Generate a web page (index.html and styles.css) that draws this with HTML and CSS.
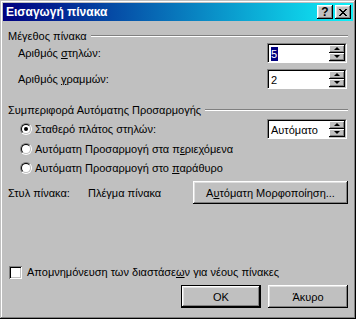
FILE: index.html
```html
<!DOCTYPE html>
<html lang="el">
<head>
<meta charset="utf-8">
<title>Εισαγωγή πίνακα</title>
<link rel="stylesheet" href="styles.css">
</head>
<body>
<div class="window">
  <div class="titlebar">
    <span class="title">Εισαγωγή πίνακα</span>
    <div class="tbtns">
      <span class="tbtn help">?</span>
      <span class="tbtn close"><svg width="8" height="7" viewBox="0 0 8 7"><path d="M0 0h2v1h1v1h2v-1h1v-1h2v1h-1v1h-1v1h-1v1h1v1h1v1h1v1h-2v-1h-1v-1h-2v1h-1v1h-2v-1h1v-1h1v-1h1v-1h-1v-1h-1v-1h-1z" fill="#000"/></svg></span>
    </div>
  </div>
  <div class="content">
    <div class="group-head g1"><span>Μέγεθος πίνακα</span><i class="rule"></i></div>
    <div class="row r-cols">
      <span class="lbl indent">Αριθμός <u>σ</u>τηλών:</span>
      <div class="spin"><div class="field"><span class="sel">5</span></div><div class="arrows"><span class="sbtn"><i class="up"></i></span><span class="sbtn"><i class="down"></i></span></div></div>
    </div>
    <div class="row r-rows">
      <span class="lbl indent">Αριθμός <u>γ</u>ραμμών:</span>
      <div class="spin"><div class="field">2</div><div class="arrows"><span class="sbtn"><i class="up"></i></span><span class="sbtn"><i class="down"></i></span></div></div>
    </div>
    <div class="group-head g2"><span>Συμπεριφορά Αυτόματης Προσαρμογής</span><i class="rule"></i></div>
    <div class="row r-fixed">
      <span class="radio checked"><i></i></span>
      <span class="lbl">Σταθερό πλάτος στηλών:</span>
      <div class="spin"><div class="field">Αυτόματο</div><div class="arrows"><span class="sbtn"><i class="up"></i></span><span class="sbtn"><i class="down"></i></span></div></div>
    </div>
    <div class="row r-radio">
      <span class="radio"><i></i></span>
      <span class="lbl">Αυτόματη Προσαρμογή στα π<u>ε</u>ριεχόμενα</span>
    </div>
    <div class="row r-radio">
      <span class="radio"><i></i></span>
      <span class="lbl">Αυτόματη Προσαρμογή στο <u>π</u>αράθυρο</span>
    </div>
    <div class="row r-style">
      <span class="lbl style-key">Στυλ πίνακα:</span>
      <span class="lbl">Πλέγμα πίνακα</span>
      <span class="btn autofmt">Α<u>υ</u>τόματη Μορφοποίηση...</span>
    </div>
    <div class="row r-check">
      <span class="check"></span>
      <span class="lbl">Απομνημόνευση των διαστάσε<u>ω</u>ν για νέους πίνακες</span>
    </div>
    <div class="row r-btns">
      <span class="btn default">OK</span>
      <span class="btn cancel">Άκυρο</span>
    </div>
  </div>
</div>
</body>
</html>
```
FILE: styles.css
```css
html, body {
  margin: 0;
  padding: 0;
  background: #c0c0c0;
}
body {
  font-family: "Liberation Sans", Arial, sans-serif;
  font-size: 11px;
  color: #000;
}
.window {
  width: 356px;
  height: 319px;
  box-sizing: border-box;
  padding: 3px;
  background: #c0c0c0;
  box-shadow: inset -1px -1px #000, inset 1px 1px #c0c0c0, inset -2px -2px #808080, inset 2px 2px #fff;
  display: flex;
  flex-direction: column;
}
.titlebar {
  height: 18px;
  display: flex;
  align-items: center;
  padding: 0 2px 0 3px;
  background: linear-gradient(to right, #000080, #10f0f8);
}
.title {
  color: #fff;
  font-weight: bold;
  font-size: 12px;
  flex: 1;
  white-space: nowrap;
}
.tbtns {
  display: flex;
  gap: 2px;
}
.tbtn {
  width: 16px;
  height: 14px;
  box-sizing: border-box;
  background: #c0c0c0;
  box-shadow: inset -1px -1px #000, inset 1px 1px #fff, inset -2px -2px #808080, inset 2px 2px #dfdfdf;
  display: flex;
  align-items: center;
  justify-content: center;
  font-weight: bold;
  font-size: 12px;
  line-height: 14px;
}
.help { padding-bottom: 1px; }
.close svg { display: block; }
.content {
  flex: 1;
  display: flex;
  flex-direction: column;
  padding: 0 5px 0 5px;
}
.group-head {
  height: 14px;
  display: flex;
  align-items: center;
  white-space: nowrap;
}
.group-head .rule {
  flex: 1;
  margin-left: 4px;
  border-top: 1px solid #808080;
  border-bottom: 1px solid #fff;
  height: 0;
}
.g1 { margin-top: 8px; }
.g2 { margin-top: 14px; }
.row {
  display: flex;
  align-items: center;
  white-space: nowrap;
}
.lbl { white-space: nowrap; }
.indent { margin-left: 10px; }
.r-cols { height: 20px; }
.r-rows { height: 20px; margin-top: 6px; }
.r-fixed { height: 20px; margin-top: 2px; }
.r-radio { height: 19px; }
.r-style { height: 23px; margin-top: 4px; }
.r-check { height: 16px; margin-top: 60px; }
.r-btns { height: 23px; margin-top: 5px; justify-content: flex-end; gap: 7px; }
.spin {
  margin-left: auto;
  margin-right: 1px;
  width: 80px;
  height: 20px;
  box-sizing: border-box;
  background: #fff;
  border-top: 1px solid #808080;
  border-left: 1px solid #808080;
  border-bottom: 1px solid #fff;
  border-right: 1px solid #fff;
  display: flex;
}
.spin .field {
  flex: 1;
  border-top: 1px solid #000;
  border-left: 1px solid #000;
  padding-left: 2px;
  display: flex;
  align-items: center;
  line-height: 14px;
}
.spin .sel {
  background: #000080;
  color: #fff;
  padding: 0 1px 0 0;
}
.spin .arrows {
  width: 16px;
  display: flex;
  flex-direction: column;
  border-top: 1px solid #000;
  border-right: 1px solid #c0c0c0;
  border-bottom: 1px solid #c0c0c0;
  background: #c0c0c0;
}
.sbtn {
  flex: 1;
  background: #c0c0c0;
  box-shadow: inset -1px -1px #000, inset 1px 1px #fff, inset -2px -2px #808080;
  display: flex;
  align-items: center;
  justify-content: center;
}
.sbtn i {
  width: 0;
  height: 0;
  border-left: 3px solid transparent;
  border-right: 3px solid transparent;
}
.sbtn i.up { border-bottom: 3px solid #000; margin-top: -1px; }
.sbtn i.down { border-top: 3px solid #000; margin-top: -1px; }
.radio {
  width: 12px;
  height: 12px;
  box-sizing: border-box;
  margin-left: 12px;
  margin-right: 3px;
  border-radius: 50%;
  border: 1px solid;
  border-color: #808080 #fff #fff #808080;
  display: flex;
}
.radio i {
  flex: 1;
  border-radius: 50%;
  border: 1px solid;
  border-color: #000 #c0c0c0 #c0c0c0 #000;
  background: #fff;
  position: relative;
}
.radio.checked i::after {
  content: "";
  position: absolute;
  left: 2px;
  top: 2px;
  width: 4px;
  height: 4px;
  border-radius: 50%;
  background: #000;
}
.style-key { width: 80px; }
.btn {
  display: flex;
  align-items: center;
  justify-content: center;
  box-sizing: border-box;
  height: 23px;
  background: #c0c0c0;
  box-shadow: inset -1px -1px #000, inset 1px 1px #fff, inset -2px -2px #808080, inset 2px 2px #dfdfdf;
}
.autofmt {
  margin-left: auto;
  width: 155px;
}
.btn.default {
  width: 80px;
  border: 1px solid #000;
}
.btn.cancel {
  width: 80px;
}
.check {
  width: 13px;
  height: 13px;
  box-sizing: border-box;
  margin-left: 1px;
  margin-right: 5px;
  background: #fff;
  box-shadow: inset 1px 1px #808080, inset -1px -1px #fff, inset 2px 2px #000, inset -2px -2px #c0c0c0;
}
u { text-decoration: underline; text-underline-offset: 1px; }
```
